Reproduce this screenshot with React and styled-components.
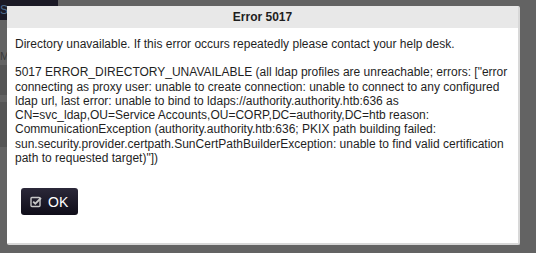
import React from 'react'
import styled, { createGlobalStyle } from 'styled-components'

const Global = createGlobalStyle`
  html, body {
    margin: 0;
    padding: 0;
    width: 536px;
    height: 253px;
    overflow: hidden;
    background: #636363;
    font-family: 'Liberation Sans', Arial, sans-serif;
  }
`

// the dimmed page behind the dialog
const Backdrop = styled.div`
  position: relative;
  width: 536px;
  height: 253px;
  background: #636363;
  display: flex;
  flex-direction: column;
`

const TopBar = styled.div`
  width: 58px;
  height: 20px;
  background: #1b1a26;
  color: #4c6a8c;
  font-size: 12px;
  line-height: 20px;
  overflow: hidden;
`

const SideLabel = styled.div`
  margin-top: 30px;
  color: #3a3a3a;
  font-size: 11px;
  height: 12px;
`

const SideBlock = styled.div`
  width: 8px;
  height: ${(p) => p.h}px;
  margin-top: ${(p) => p.gap}px;
  background: #555;
`

const Dialog = styled.div`
  position: absolute;
  left: 7px;
  top: 6px;
  width: 511px;
  height: 237px;
  background: #fff;
  border-right: 2px solid #d8d8d8;
  border-bottom: 2px solid #d8d8d8;
  border-radius: 2px;
  display: flex;
  flex-direction: column;
`

const Header = styled.div`
  height: 22px;
  background: #e8e8e8;
  display: flex;
  align-items: center;
  justify-content: center;
  font-size: 12px;
  font-weight: bold;
  color: #1e1e1e;
`

const Body = styled.div`
  padding: 9px 8px 0 8px;
  font-size: 12px;
  line-height: 14.3px;
  color: #1f1f1f;
`

const Para = styled.p`
  margin: 0 0 14px 0;
`

const Footer = styled.div`
  padding: 9px 0 0 14px;
`

const OkButton = styled.button`
  display: flex;
  align-items: center;
  gap: 6px;
  width: 57px;
  height: 27px;
  padding: 0 0 0 9px;
  border: none;
  border-radius: 3px;
  background: linear-gradient(#2b2839, #0f0d19);
  color: #fff;
  font-family: 'Liberation Sans', Arial, sans-serif;
  font-size: 14px;
  cursor: pointer;
`

const CheckIcon = () => (
  <svg width="12" height="12" viewBox="0 0 12 12" fill="none">
    <rect x="1" y="1.5" width="9" height="9" rx="1" stroke="#c8c8c8" strokeWidth="1.4" />
    <path d="M3.2 5.6 L5.3 7.7 L11 2" stroke="#c8c8c8" strokeWidth="1.8" />
  </svg>
)

export default function App() {
  return (
    <>
      <Global />
      <Backdrop>
        <TopBar>S</TopBar>
        <SideLabel>M</SideLabel>
        <SideBlock h={30} gap={3} />
        <SideBlock h={45} gap={7} />
        <Dialog>
          <Header>Error 5017</Header>
          <Body>
            <Para>
              Directory unavailable. If this error occurs repeatedly please contact your help desk.
            </Para>
            <Para>
              5017 ERROR_DIRECTORY_UNAVAILABLE (all ldap profiles are unreachable; errors: ["error
              connecting as proxy user: unable to create connection: unable to connect to any configured
              ldap url, last error: unable to bind to ldaps://authority.authority.htb:636 as
              CN=svc_ldap,OU=Service Accounts,OU=CORP,DC=authority,DC=htb reason:
              CommunicationException (authority.authority.htb:636; PKIX path building failed:
              sun.security.provider.certpath.SunCertPathBuilderException: unable to find valid certification
              path to requested target)"])
            </Para>
          </Body>
          <Footer>
            <OkButton>
              <CheckIcon />
              OK
            </OkButton>
          </Footer>
        </Dialog>
      </Backdrop>
    </>
  )
}
